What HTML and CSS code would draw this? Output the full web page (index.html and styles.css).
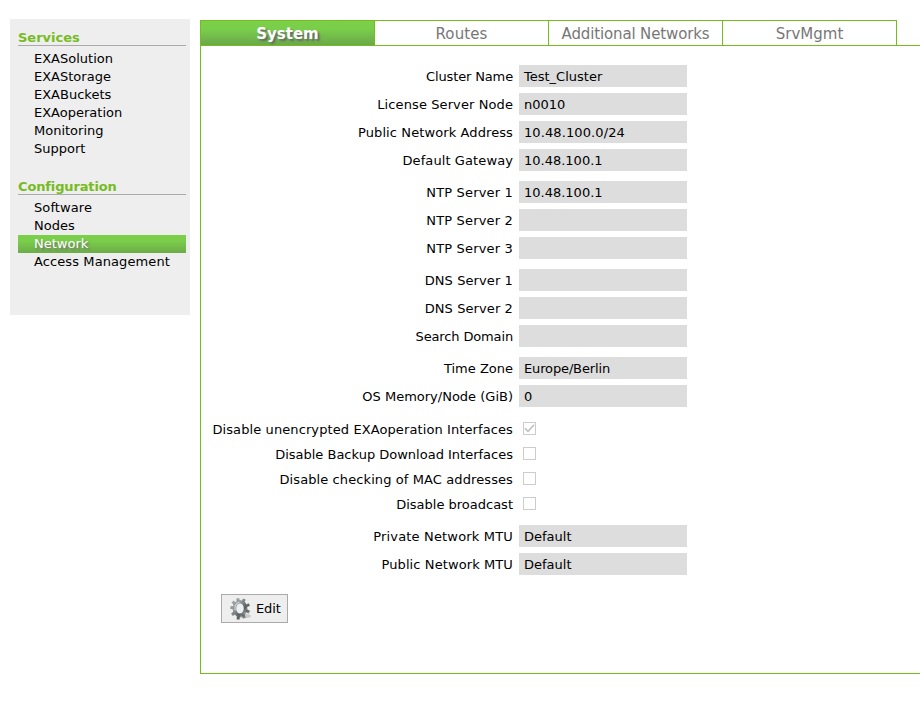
FILE: index.html
```
<!DOCTYPE html>
<html lang="en">
<head>
<meta charset="utf-8">
<title>Network</title>
<link rel="stylesheet" href="styles.css">
</head>
<body>
<div class="layout">
  <nav class="sidebar">
    <section class="menu">
      <h2>Services</h2>
      <ul>
        <li>EXASolution</li>
        <li>EXAStorage</li>
        <li>EXABuckets</li>
        <li>EXAoperation</li>
        <li>Monitoring</li>
        <li>Support</li>
      </ul>
    </section>
    <section class="menu">
      <h2 class="tight">Configuration</h2>
      <ul>
        <li class="wide">Software</li>
        <li>Nodes</li>
        <li class="current">Network</li>
        <li class="wide">Access Management</li>
      </ul>
    </section>
  </nav>
  <main class="content">
    <div class="tabs">
      <div class="tab active">System</div>
      <div class="tab wide">Routes</div>
      <div class="tab tight">Additional Networks</div>
      <div class="tab">SrvMgmt</div>
    </div>
    <div class="panel">
      <div class="group">
        <div class="row"><span class="label tight">Cluster Name</span><span class="value">Test_Cluster</span></div>
        <div class="row"><span class="label wide">License Server Node</span><span class="value">n0010</span></div>
        <div class="row"><span class="label wide">Public Network Address</span><span class="value wide">10.48.100.0/24</span></div>
        <div class="row"><span class="label wide">Default Gateway</span><span class="value">10.48.100.1</span></div>
      </div>
      <div class="group">
        <div class="row"><span class="label wider">NTP Server 1</span><span class="value">10.48.100.1</span></div>
        <div class="row"><span class="label wider">NTP Server 2</span><span class="value"></span></div>
        <div class="row"><span class="label wider">NTP Server 3</span><span class="value"></span></div>
      </div>
      <div class="group">
        <div class="row"><span class="label wide">DNS Server 1</span><span class="value"></span></div>
        <div class="row"><span class="label wide">DNS Server 2</span><span class="value"></span></div>
        <div class="row"><span class="label tight">Search Domain</span><span class="value"></span></div>
      </div>
      <div class="group">
        <div class="row"><span class="label">Time Zone</span><span class="value tight">Europe/Berlin</span></div>
        <div class="row"><span class="label">OS Memory/Node (GiB)</span><span class="value">0</span></div>
      </div>
      <div class="group checks">
        <div class="row"><span class="label wide">Disable unencrypted EXAoperation Interfaces</span><span class="box"><svg viewBox="0 0 11 11"><path d="M1 5.2 L4 8.4 L10 1.8"/></svg></span></div>
        <div class="row"><span class="label">Disable Backup Download Interfaces</span><span class="box"></span></div>
        <div class="row"><span class="label wide">Disable checking of MAC addresses</span><span class="box"></span></div>
        <div class="row"><span class="label">Disable broadcast</span><span class="box"></span></div>
      </div>
      <div class="group">
        <div class="row"><span class="label wider">Private Network MTU</span><span class="value">Default</span></div>
        <div class="row"><span class="label wide">Public Network MTU</span><span class="value">Default</span></div>
      </div>
      <button class="edit" type="button">
        <svg class="gear" viewBox="0 0 24 24">
          <defs>
            <linearGradient id="steel" x1="0" y1="0" x2="1" y2="1">
              <stop offset="0" stop-color="#b4b8b8"/>
              <stop offset=".45" stop-color="#7d8383"/>
              <stop offset=".7" stop-color="#555b5b"/>
              <stop offset="1" stop-color="#b9bcbc"/>
            </linearGradient>
          </defs>
          <ellipse class="shade" cx="16" cy="19" rx="7" ry="2.5"/>
          <g stroke="url(#steel)">
            <ellipse class="ring" cx="12" cy="11.5" rx="5.6" ry="6.8"/>
            <path class="teeth" d="M10.3 5 L9.7 1.3 M15 5.3 L16.3 2 M18 9 L21.3 7.5 M18 13.5 L21.4 15.1 M15 17.5 L16.5 21 M10.5 18.1 L10 22.5 M6.8 15.3 L4 17.8 M6 10.8 L2.4 10.5 M7 7.3 L4.6 4.6"/>
          </g>
          <path class="shine" d="M7.2 13.5 Q6 7.5 11.5 4.8"/>
        </svg>
        <span>Edit</span>
      </button>
    </div>
  </main>
</div>
</body>
</html>
```
FILE: styles.css
```
* { box-sizing: border-box; }
body {
  margin: 0;
  background: #fff;
  color: #000;
  font: 13px/18px Verdana, "DejaVu Sans", sans-serif;
  overflow: hidden;
}
.layout {
  display: flex;
  align-items: flex-start;
  gap: 10px;
  padding: 19px 0 0 10px;
}
.sidebar {
  flex: none;
  width: 180px;
  height: 296px;
  padding: 10px 4px 0 8px;
  background: #eee;
}
.menu { margin-bottom: 20px; }
.menu h2 {
  margin: 0 0 4px;
  height: 17px;
  border-bottom: 1px solid #aaa;
  color: #77bc1f;
  font-size: 13px;
  line-height: 18px;
}
.menu ul { margin: 0; padding: 0; list-style: none; }
.menu li { height: 18px; padding-left: 16px; white-space: nowrap; }
.menu .current {
  color: #fff;
  background: linear-gradient(#7ad148 0%, #7acd4b 35%, #6cac48 100%);
  text-shadow: 2px 2px 2px #777;
}
.wide { letter-spacing: .1px; }
.wider { letter-spacing: .17px; }
.tight { letter-spacing: -.14px; }
.content { flex: 1; padding-top: 1px; }
.tabs {
  display: flex;
  height: 26px;
  border-bottom: 1px solid #77bc1f;
}
.tab {
  width: 174px;
  height: 25px;
  border: solid #77bc1f;
  border-width: 1px 0 0 1px;
  color: #777;
  font-size: 15px;
  line-height: 26px;
  text-align: center;
}
.tab:last-child { width: 175px; border-right-width: 1px; }
.tab.active {
  color: #fff;
  font-weight: bold;
  background: linear-gradient(#7ad148 0%, #7acd4b 35%, #6aa84a 100%);
  text-shadow: 2px 2px 2px #666;
}
.panel {
  height: 628px;
  padding-top: 16px;
  border: solid #77bc1f;
  border-width: 0 0 1px 1px;
}
.group { margin-bottom: 4px; }
.row { display: flex; align-items: center; height: 28px; }
.label { width: 312px; margin-right: 6px; padding-top: 2px; text-align: right; white-space: nowrap; }
.value {
  width: 168px;
  height: 22px;
  padding-left: 5px;
  background: #ddd;
  line-height: 24px;
}
.checks { margin: 6px 0; }
.checks .row { height: 25px; }
.box {
  width: 13px;
  height: 13px;
  margin-left: 4px;
  border: 1px solid #ccc;
}
.box svg { display: block; width: 11px; height: 11px; fill: none; stroke: #bbb; stroke-width: 1.5; }
.edit {
  display: flex;
  align-items: center;
  width: 67px;
  height: 29px;
  margin: 16px 0 0 20px;
  padding: 0 0 0 6px;
  gap: 4px;
  border: 1px solid #aaa;
  background: #eee;
  color: #000;
  font: inherit;
  letter-spacing: -.1px;
}
.gear { width: 24px; height: 24px; }
.ring { fill: none; stroke-width: 3.6; }
.teeth { fill: none; stroke-width: 3; }
.shine { fill: none; stroke: #cdd1d1; stroke-width: 1.2; }
.shade { fill: #ccc; }
```
